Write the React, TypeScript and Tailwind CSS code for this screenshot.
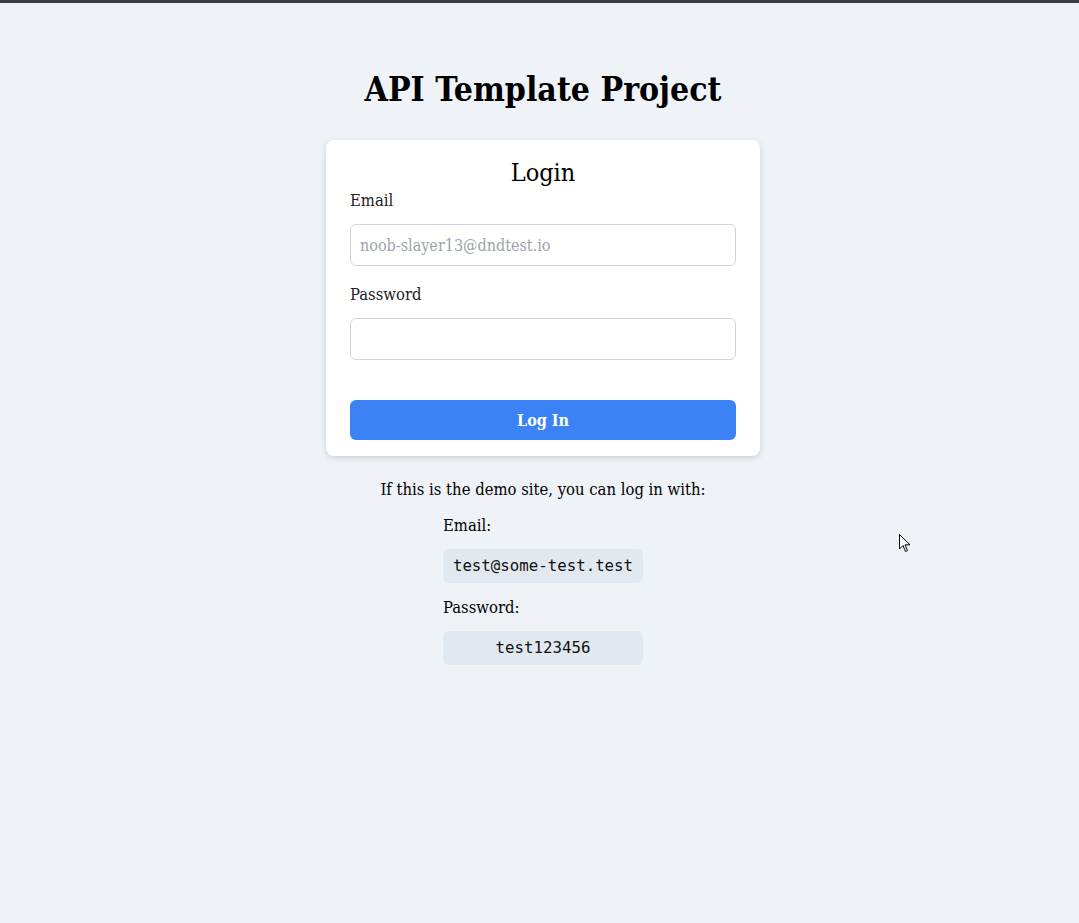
import React from "react";

export default function App() {
  const serif = "font-['DejaVu_Serif_Condensed','DejaVu_Serif',serif]";
  const mono = "font-['DejaVu_Sans_Mono','Liberation_Mono',monospace]";
  return (
    <div className={`min-h-[923px] w-full bg-[#eff3f8] ${serif} text-[#111] relative`}>
      <div className="h-[3px] w-full bg-[#3c3c3c]" />
      <div className="flex flex-col items-center pt-[64px] pl-[7px]">
        <h1 className="text-[33.5px] font-bold leading-[46px] text-black">API Template Project</h1>
        <div className="mt-[27px] w-[434px] rounded-lg bg-white px-6 pt-[18px] pb-4 shadow-[0_2px_6px_rgba(0,0,0,0.15)]">
          <h2 className="text-center text-[25px] leading-[30px] text-black">Login</h2>
          <label className="mt-[1px] block text-[16.5px] leading-[24px] text-[#222]">Email</label>
          <input
            className="mt-[11px] block h-[42px] w-full rounded-md border border-[#cbd5e1] px-[9px] text-[16px] outline-none placeholder:text-[#9ca3af]"
            placeholder="noob-slayer13@dndtest.io"
          />
          <label className="mt-[16px] block pt-[1px] text-[16.5px] leading-[24px] text-[#222]">Password</label>
          <input
            type="password"
            className="mt-[11px] block h-[42px] w-full rounded-md border border-[#cbd5e1] px-[9px] text-[16px] outline-none"
          />
          <button className="mt-[40px] flex h-[40px] w-full items-center justify-center rounded-md bg-[#3b82f6] pt-[1px] text-[16px] font-bold text-white">
            Log In
          </button>
        </div>
        <p className="mt-[22px] text-[16.5px] leading-[24px] text-black">If this is the demo site, you can log in with:</p>
        <div className="mt-[12px] flex w-[200px] flex-col">
          <span className="text-[16.5px] leading-[24px] text-black">Email:</span>
          <div className={`mt-[11px] flex h-[34px] items-center justify-center rounded-md bg-[#e2e8f0] ${mono} text-[15.75px] text-[#111]`}>
            test@some-test.test
          </div>
          <span className="mt-[12px] pt-[1px] text-[16.5px] leading-[24px] text-black">Password:</span>
          <div className={`mt-[11px] flex h-[34px] items-center justify-center rounded-md bg-[#e2e8f0] ${mono} text-[15.75px] text-[#111]`}>
            test123456
          </div>
        </div>
      </div>
      <svg className="absolute left-[899px] top-[534px]" width="12" height="20" viewBox="0 0 12 20">
        <path d="M0.5 0.5 L0.5 15 L4 11.5 L6.5 17.5 L8.5 16.6 L6 10.8 L11 10.8 Z" fill="white" stroke="black" strokeWidth="1" strokeLinejoin="round" />
      </svg>
    </div>
  );
}
